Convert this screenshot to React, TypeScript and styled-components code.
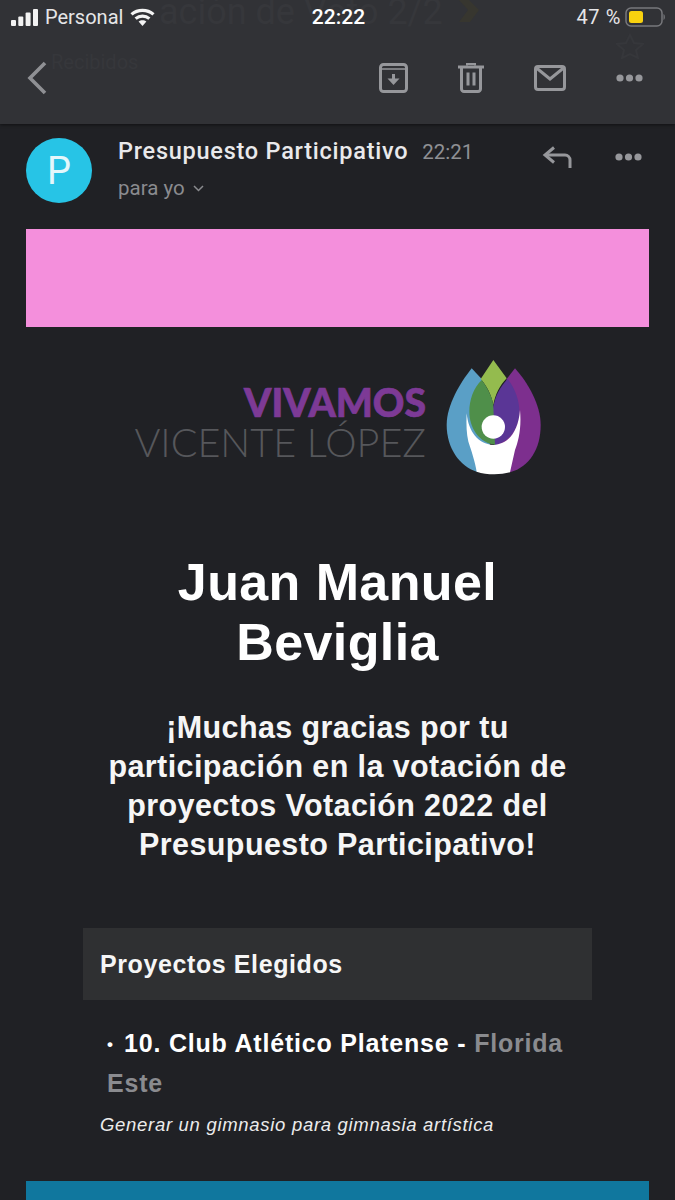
import React from 'react'
import styled, { createGlobalStyle } from 'styled-components'

const GlobalStyle = createGlobalStyle`
    html, body {
        margin: 0;
        padding: 0;
        background: #202125;
    }
    * { box-sizing: border-box; }
`

const Page = styled.div`
    width: 675px;
    height: 1200px;
    overflow: hidden;
    background: #202125;
    font-family: "Liberation Sans", Arial, sans-serif;
`

const TopBar = styled.header`
    position: relative;
    height: 124px;
    background: #313236;
    box-shadow: 0 1px 3px rgba(0, 0, 0, .5);
`

// what scrolled under the translucent bar: barely visible
const GhostSubject = styled.div`
    position: absolute;
    left: 159px;
    top: -9px;
    font-family: "Roboto", sans-serif;
    font-size: 36px;
    color: #36373b;
    white-space: nowrap;
`

const GhostFolder = styled.div`
    position: absolute;
    left: 51px;
    top: 50px;
    font-family: "Roboto", sans-serif;
    font-size: 20px;
    color: #36373b;
`

const GhostMarker = styled.svg`
    position: absolute;
    left: 457px;
    top: 0;
`

const GhostStar = styled.svg`
    position: absolute;
    left: 616px;
    top: 33px;
`

const StatusBar = styled.div`
    position: relative;
    height: 34px;
    padding: 0 9px 0 11px;
    display: grid;
    grid-template-columns: 1fr auto 1fr;
    align-items: center;
    font-family: "Roboto", sans-serif;
    font-size: 20px;
    color: #e6e6e8;
`

const StatusLeft = styled.div`
    display: flex;
    align-items: center;
    gap: 7px;
`

const StatusRight = styled.div`
    display: flex;
    align-items: center;
    justify-content: flex-end;
    gap: 4px;
    letter-spacing: .6px;
`

const Clock = styled.span`
    font-size: 21px;
    font-weight: 500;
    color: #fff;
`

const ToolRow = styled.div`
    position: relative;
    height: 90px;
    padding: 0 32px 2px 26px;
    display: flex;
    align-items: center;
    justify-content: space-between;
`

const ToolIcons = styled.div`
    display: flex;
    align-items: center;
    gap: 50px;
`

const MailHead = styled.section`
    height: 105px;
    padding: 14px 33px 0 26px;
    display: flex;
    align-items: flex-start;
`

const Avatar = styled.div`
    width: 66px;
    height: 65px;
    border-radius: 50%;
    background: #27c4e6;
    color: #e4f7fb;
    font-family: "Roboto", sans-serif;
    font-size: 38px;
    display: flex;
    align-items: center;
    justify-content: center;
    flex-shrink: 0;
`

const Sender = styled.div`
    margin-left: 26px;
    flex: 1;
`

const SenderLine = styled.div`
    display: flex;
    align-items: baseline;
    gap: 14px;
    height: 24px;
    margin-top: -1px;
`

const SenderName = styled.span`
    font-family: "Roboto", sans-serif;
    font-weight: 500;
    font-size: 23.5px;
    letter-spacing: .75px;
    color: #e9e9eb;
`

const SentAt = styled.span`
    font-family: "Roboto", sans-serif;
    font-size: 20.5px;
    color: #8f9094;
`

const Recipient = styled.div`
    margin-top: 15px;
    display: flex;
    align-items: center;
    gap: 8px;
    font-family: "Roboto", sans-serif;
    font-size: 20.5px;
    color: #8a8b8f;
`

const HeadActions = styled.div`
    display: flex;
    align-items: center;
    gap: 43px;
    height: 22px;
    margin-top: 8px;
`

const Banner = styled.div`
    height: 98px;
    margin: 0 26px;
    background: #f48fdc;
`

const LogoRow = styled.div`
    height: 125px;
    margin-top: 28px;
    padding-left: 124px;
    display: flex;
    align-items: center;
    gap: 14px;
`

const LogoText = styled.div`
    width: 302px;
    padding-top: 14px;
    text-align: right;
    font-family: "Lato", sans-serif;
`

const LogoTop = styled.div`
    font-weight: 900;
    font-size: 39px;
    line-height: 34px;
    color: #7d3a96;
    -webkit-text-stroke: .7px #7d3a96;
`

const LogoBottom = styled.div`
    font-weight: 300;
    font-size: 39.6px;
    line-height: 46px;
    color: #56575b;
    white-space: nowrap;
`

const Name = styled.h1`
    margin: 72px 0 0;
    text-align: center;
    font-size: 52px;
    line-height: 60px;
    font-weight: 700;
    letter-spacing: .4px;
    color: #fff;
`

const Thanks = styled.h2`
    margin: 36px auto 0;
    width: 520px;
    text-align: center;
    font-size: 30.5px;
    line-height: 39px;
    font-weight: 700;
    letter-spacing: .4px;
    color: #f6f6f6;
`

const Section = styled.div`
    margin: 64px 83px 0;
    height: 72px;
    padding-left: 17px;
    display: flex;
    align-items: center;
    background: #2f3032;
    font-size: 25px;
    font-weight: 700;
    letter-spacing: .6px;
    color: #f6f6f6;
`

const Project = styled.div`
    margin: 24px 100px 0 107px;
    font-size: 25px;
    line-height: 39px;
    font-weight: 700;
    letter-spacing: .8px;
    color: #fff;
`

const Bullet = styled.span`
    display: inline-block;
    width: 17px;
    font-size: 17px;
    vertical-align: 2px;
`

const Place = styled.span`
    color: #8a8b8f;
`

const Summary = styled.div`
    margin: 8px 0 0 100px;
    font-size: 18.5px;
    line-height: 28px;
    font-style: italic;
    letter-spacing: .7px;
    color: #ececec;
`

const CallToAction = styled.div`
    height: 40px;
    margin: 42px 26px 0;
    background: #10779e;
`

const Battery = () => (
    <svg width="41" height="20" viewBox="0 0 41 20">
        <rect x="1" y="1" width="36" height="18" rx="5" fill="none" stroke="#77787c" strokeWidth="1.5" />
        <rect x="4" y="4" width="14" height="12" rx="2.5" fill="#f9d20f" />
        <path d="M38.5 7c1.8.6 1.8 5.4 0 6z" fill="#77787c" />
    </svg>
)

const Signal = () => (
    <svg width="27" height="17" viewBox="0 0 27 17" fill="#f2f2f2">
        <rect x="0" y="11" width="5" height="6" rx="1" />
        <rect x="7.3" y="7.5" width="5" height="9.5" rx="1" />
        <rect x="14.6" y="3.5" width="5" height="13.5" rx="1" />
        <rect x="22" y="0" width="5" height="17" rx="1" />
    </svg>
)

const Wifi = () => (
    <svg width="25" height="18" viewBox="0 0 25 18" fill="none" stroke="#f4f4f4" strokeWidth="3.2">
        <path d="M1.5 6.4c6.2-5.4 15.8-5.4 22 0" />
        <path d="M5.6 10.6c4-3.4 9.8-3.4 13.8 0" />
        <path d="M12.5 18 8.6 13.6c2.2-1.8 5.6-1.8 7.8 0z" fill="#f4f4f4" stroke="none" />
    </svg>
)

const Back = () => (
    <svg width="22" height="34" viewBox="0 0 22 34" fill="none" stroke="#8f9094" strokeWidth="3.6">
        <path d="M19 2 4 17l15 15" />
    </svg>
)

const Archive = () => (
    <svg width="29" height="30" viewBox="0 0 29 30" fill="none" stroke="#96979b" strokeWidth="3">
        <rect x="1.5" y="1.5" width="26" height="27" rx="3" />
        <path d="M2 6h25" strokeWidth="1.5" />
        <path d="M14.5 11v6" />
        <path d="M8.5 15.5h12l-6 6.5z" fill="#96979b" stroke="none" />
    </svg>
)

const Trash = () => (
    <svg width="26" height="30" viewBox="0 0 26 30" fill="none" stroke="#96979b" strokeWidth="3">
        <path d="M0 4h26" />
        <path d="M9 2.5V1h8v1.5" strokeWidth="2" />
        <path d="M3.5 5v21a2.5 2.5 0 0 0 2.5 2.5h14a2.5 2.5 0 0 0 2.5-2.5V5" />
        <path d="M10 9.5v13M16 9.5v13" />
    </svg>
)

const Envelope = () => (
    <svg width="32" height="26" viewBox="0 0 32 26" fill="none" stroke="#96979b" strokeWidth="3">
        <rect x="1.5" y="1.5" width="29" height="23" rx="2.5" />
        <path d="m2.5 3 13.5 11L29.5 3" />
    </svg>
)

const Dots = () => (
    <svg width="27" height="8" viewBox="0 0 27 8" fill="#96979b">
        <circle cx="4" cy="4" r="3.6" />
        <circle cx="13.5" cy="4" r="3.6" />
        <circle cx="23" cy="4" r="3.6" />
    </svg>
)

const Reply = () => (
    <svg width="30" height="22" viewBox="0 0 30 22" fill="none" stroke="#96979b" strokeWidth="3">
        <path d="M12 1.5 3 9l9 7.5" />
        <path d="M3 9h20a5 5 0 0 1 5 5v8" />
    </svg>
)

const Chevron = () => (
    <svg width="11" height="7" viewBox="0 0 11 7" fill="none" stroke="#8a8b8f" strokeWidth="1.5">
        <path d="m1 1 4.5 4.5L10 1" />
    </svg>
)

// traced at 3x, so the viewBox is three times the drawn size
const LogoMark = () => (
    <svg width="110" height="125" viewBox="0 0 330 375">
        <path d="M95 40 L125 72 L160 350 L110 350 C60 335 20 280 20 210 C20 150 60 85 95 40Z" fill="#5a9fc6" />
        <path d="M225 40 C265 85 302 150 302 210 C302 280 270 335 210 352 L160 300 L200 72Z" fill="#7d2f8e" />
        <path d="M160 15 L200 70 C180 90 165 120 160 150 C155 120 140 92 122 72Z" fill="#94bb4e" />
        <path d="M125 75 C100 100 88 135 88 170 C88 215 115 265 170 270 L170 200 L160 150 C155 120 140 95 125 75Z" fill="#4f8f4a" />
        <path d="M203 72 C180 95 165 125 160 155 L165 270 C210 260 238 215 238 170 C238 135 225 100 203 72Z" fill="#5a3696" />
        <path d="M80 175 C85 230 115 268 160 270 C205 268 235 230 240 165 C245 220 235 260 225 285 L210 352 C180 360 140 360 110 350 C105 320 95 290 90 275 C80 250 78 215 80 175Z" fill="#fff" />
        <circle cx="160" cy="216" r="35" fill="#fff" />
    </svg>
)

export default function App() {
    return (
        <Page>
            <GlobalStyle />
            <TopBar>
                <GhostSubject>ación de Voto 2/2</GhostSubject>
                <GhostFolder>Recibidos</GhostFolder>
                <GhostMarker width="24" height="22" viewBox="0 0 24 22">
                    <path d="M2 0h10l10 10-9 12H2l9-12z" fill="#37362f" />
                </GhostMarker>
                <GhostStar width="28" height="26" viewBox="0 0 28 26" fill="none" stroke="#36373b" strokeWidth="2">
                    <path d="m14 2 4 8 9 1-7 6 2 8-8-4-8 4 2-8-7-6 9-1z" />
                </GhostStar>
                <StatusBar>
                    <StatusLeft>
                        <Signal />
                        <span>Personal</span>
                        <Wifi />
                    </StatusLeft>
                    <Clock>22:22</Clock>
                    <StatusRight>
                        <span>47 %</span>
                        <Battery />
                    </StatusRight>
                </StatusBar>
                <ToolRow>
                    <Back />
                    <ToolIcons>
                        <Archive />
                        <Trash />
                        <Envelope />
                        <Dots />
                    </ToolIcons>
                </ToolRow>
            </TopBar>

            <MailHead>
                <Avatar>P</Avatar>
                <Sender>
                    <SenderLine>
                        <SenderName>Presupuesto Participativo</SenderName>
                        <SentAt>22:21</SentAt>
                    </SenderLine>
                    <Recipient>
                        para yo
                        <Chevron />
                    </Recipient>
                </Sender>
                <HeadActions>
                    <Reply />
                    <Dots />
                </HeadActions>
            </MailHead>

            <Banner />

            <LogoRow>
                <LogoText>
                    <LogoTop>VIVAMOS</LogoTop>
                    <LogoBottom>VICENTE LÓPEZ</LogoBottom>
                </LogoText>
                <LogoMark />
            </LogoRow>

            <Name>
                Juan Manuel
                <br />
                Beviglia
            </Name>

            <Thanks>¡Muchas gracias por tu participación en la votación de proyectos Votación 2022 del Presupuesto Participativo!</Thanks>

            <Section>Proyectos Elegidos</Section>

            <Project>
                <Bullet>•</Bullet>10. Club Atlético Platense - <Place>Florida Este</Place>
            </Project>

            <Summary>Generar un gimnasio para gimnasia artística</Summary>

            <CallToAction />
        </Page>
    )
}
